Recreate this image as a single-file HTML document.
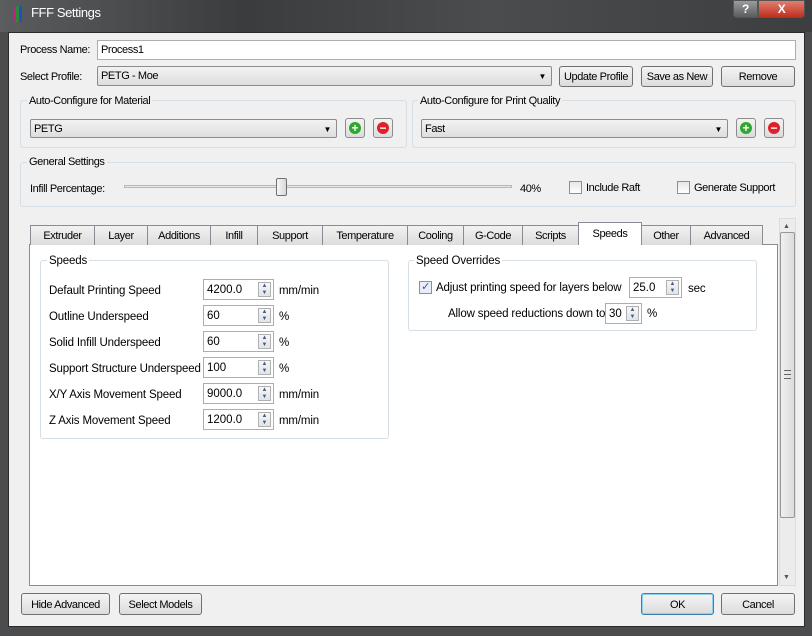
<!DOCTYPE html>
<html><head><meta charset="utf-8"><style>
*{box-sizing:border-box;margin:0;padding:0}
body{width:812px;height:636px;overflow:hidden;background:#4a4c4e;font-family:"Liberation Sans",sans-serif;font-size:11px;letter-spacing:-0.4px;color:#000;position:relative}
.a{position:absolute;white-space:nowrap}
.l{margin-top:1px}
#title{left:0;top:0;width:812px;height:32px;background:linear-gradient(90deg,#5a5c5e,#3a3c3e 30%,#4a4c4e 60%,#3c3e40);}
#body{left:8px;top:32px;width:797px;height:595px;background:#f0f0f0;border:1px solid #2a2a2a}
.in{background:#fff;border:1px solid #abadb3;padding-left:3px;line-height:19px}
.btn{background:linear-gradient(#f4f4f4,#dcdcdc);border:1px solid #707070;border-radius:3px;text-align:center;line-height:20px}
.combo{background:linear-gradient(#f2f2f2,#dedede);border:1px solid #8c8c8c;border-radius:2px;padding-left:3px;line-height:19px}
.combo:after{content:"▼";position:absolute;right:5px;top:0;font-size:8px}
.grp{border:1px solid #d5dfe5;border-radius:3px}
.gt{background:#f0f0f0;padding:0 2px}
.pl,.mn{width:20px;height:20px;border:1px solid #8c8c8c;border-radius:3px;background:linear-gradient(#f4f4f4,#dcdcdc)}
.pl i,.mn i{position:absolute;left:3px;top:3px;width:12px;height:12px;border-radius:50%;color:#fff;font-style:normal;font-weight:bold;font-size:12px;line-height:12px;text-align:center;letter-spacing:0}
.pl i{background:#2fa82f}.mn i{background:#e0202a}
.cb{width:13px;height:13px;border:1px solid #8e8f8f;background:linear-gradient(#e6e6e6,#fff)}
.tab{top:225px;height:20px;border:1px solid #898c95;border-bottom:none;background:linear-gradient(#f2f2f2,#dcdcdc);text-align:center;line-height:21px}
.spin{height:21px;border:1px solid #abadb3;background:#fff;padding-left:3px;line-height:20px;font-size:11.5px;letter-spacing:0}
.spin b{position:absolute;right:2px;top:2px;width:13px;height:15px;border:1px solid #b0b0b0;background:linear-gradient(#f6f6f6,#dfe5ea);font-size:6px;color:#4a5a80;line-height:7px;text-align:center;font-weight:normal}
.dv{font-size:11.5px;letter-spacing:-0.15px;margin-top:1px}
</style></head><body>
<div class="a" id="title"></div>
<div class="a" style="left:13px;top:7px;width:3px;height:14px;background:#c0208a"></div>
<div class="a" style="left:16px;top:6px;width:3px;height:16px;background:#2a8a3a"></div>
<div class="a" style="left:19px;top:6px;width:3px;height:16px;background:#2050c0"></div>
<div class="a" style="left:31px;top:5px;color:#fff;font-size:13px">FFF Settings</div>
<div class="a" style="left:733px;top:0;width:25px;height:18px;border:1px solid #555;border-radius:0 0 0 4px;background:linear-gradient(#9a9c9e,#5a5c5e);color:#fff;text-align:center;font-weight:bold;font-size:12px;line-height:16px">?</div>
<div class="a" style="left:758px;top:0;width:47px;height:18px;border:1px solid #555;border-radius:0 0 4px 0;background:linear-gradient(#e08070,#c03020);color:#fff;text-align:center;font-weight:bold;font-size:12px;line-height:16px">X</div>
<div class="a" id="body"></div>

<div class="a l" style="left:20px;top:43px">Process Name:</div>
<div class="a in" style="left:97px;top:40px;width:699px;height:20px">Process1</div>
<div class="a l" style="left:20px;top:70px">Select Profile:</div>
<div class="a combo" style="left:97px;top:66px;width:455px;height:20px">PETG - Moe</div>
<div class="a btn" style="left:559px;top:66px;width:74px;height:21px">Update Profile</div>
<div class="a btn" style="left:641px;top:66px;width:72px;height:21px">Save as New</div>
<div class="a btn" style="left:721px;top:66px;width:74px;height:21px">Remove</div>

<div class="a grp" style="left:20px;top:100px;width:387px;height:48px"></div>
<div class="a gt l" style="left:27px;top:94px">Auto-Configure for Material</div>
<div class="a combo" style="left:30px;top:119px;width:307px;height:19px">PETG</div>
<div class="a pl" style="left:345px;top:118px"><i>+</i></div>
<div class="a mn" style="left:373px;top:118px"><i>−</i></div>
<div class="a grp" style="left:412px;top:100px;width:384px;height:48px"></div>
<div class="a gt l" style="left:418px;top:94px">Auto-Configure for Print Quality</div>
<div class="a combo" style="left:421px;top:119px;width:307px;height:19px">Fast</div>
<div class="a pl" style="left:736px;top:118px"><i>+</i></div>
<div class="a mn" style="left:764px;top:118px"><i>−</i></div>

<div class="a grp" style="left:20px;top:162px;width:776px;height:45px"></div>
<div class="a gt l" style="left:27px;top:155px">General Settings</div>
<div class="a l" style="left:30px;top:182px">Infill Percentage:</div>
<div class="a" style="left:124px;top:185px;width:388px;height:3px;border:1px solid #b8b8b8;background:#e6e6e6"></div>
<div class="a" style="left:276px;top:178px;width:11px;height:18px;border:1px solid #707070;border-radius:2px;background:linear-gradient(90deg,#f6f6f6,#d8d8d8)"></div>
<div class="a l" style="left:520px;top:182px">40%</div>
<div class="a cb" style="left:569px;top:181px"></div>
<div class="a l" style="left:586px;top:181px">Include Raft</div>
<div class="a cb" style="left:677px;top:181px"></div>
<div class="a l" style="left:694px;top:181px">Generate Support</div>

<div class="a" style="left:29px;top:244px;width:749px;height:342px;background:#fff;border:1px solid #898c95"></div>
<div class="a tab" style="left:30px;width:65px">Extruder</div>
<div class="a tab" style="left:94px;width:54px">Layer</div>
<div class="a tab" style="left:147px;width:64px">Additions</div>
<div class="a tab" style="left:210px;width:48px">Infill</div>
<div class="a tab" style="left:257px;width:66px">Support</div>
<div class="a tab" style="left:322px;width:86px">Temperature</div>
<div class="a tab" style="left:407px;width:57px">Cooling</div>
<div class="a tab" style="left:463px;width:60px">G-Code</div>
<div class="a tab" style="left:522px;width:57px">Scripts</div>
<div class="a tab" style="left:578px;top:222px;height:23px;width:64px;background:#fff;line-height:23px;z-index:2">Speeds</div>
<div class="a tab" style="left:641px;width:50px">Other</div>
<div class="a tab" style="left:690px;width:73px">Advanced</div>

<div class="a" style="left:779px;top:218px;width:17px;height:368px;background:#ececec;border:1px solid #ddd"></div>
<div class="a" style="left:783px;top:223px;font-size:7px;color:#555">▲</div>
<div class="a" style="left:783px;top:574px;font-size:7px;color:#555">▼</div>
<div class="a" style="left:780px;top:232px;width:15px;height:286px;border:1px solid #979797;border-radius:2px;background:linear-gradient(90deg,#f0f0f0,#dcdcdc)"></div>
<div class="a" style="left:784px;top:370px;width:7px;height:9px;border-top:1px solid #666;border-bottom:1px solid #666"></div>
<div class="a" style="left:784px;top:374px;width:7px;height:1px;background:#666"></div>

<div class="a grp" style="left:40px;top:260px;width:349px;height:179px"></div>
<div class="a gt dv" style="left:47px;top:254px;background:#fff">Speeds</div>
<div class="a grp" style="left:408px;top:260px;width:349px;height:71px"></div>
<div class="a gt dv" style="left:414px;top:254px;background:#fff">Speed Overrides</div>

<div class="a dv" style="left:49px;top:284px">Default Printing Speed</div>
<div class="a spin" style="left:203px;top:279px;width:71px">4200.0<b>▲<br>▼</b></div>
<div class="a dv" style="left:279px;top:284px">mm/min</div>
<div class="a dv" style="left:49px;top:310px">Outline Underspeed</div>
<div class="a spin" style="left:203px;top:305px;width:71px">60<b>▲<br>▼</b></div>
<div class="a dv" style="left:279px;top:310px">%</div>
<div class="a dv" style="left:49px;top:336px">Solid Infill Underspeed</div>
<div class="a spin" style="left:203px;top:331px;width:71px">60<b>▲<br>▼</b></div>
<div class="a dv" style="left:279px;top:336px">%</div>
<div class="a dv" style="left:49px;top:362px">Support Structure Underspeed</div>
<div class="a spin" style="left:203px;top:357px;width:71px">100<b>▲<br>▼</b></div>
<div class="a dv" style="left:279px;top:362px">%</div>
<div class="a dv" style="left:49px;top:388px">X/Y Axis Movement Speed</div>
<div class="a spin" style="left:203px;top:383px;width:71px">9000.0<b>▲<br>▼</b></div>
<div class="a dv" style="left:279px;top:388px">mm/min</div>
<div class="a dv" style="left:49px;top:414px">Z Axis Movement Speed</div>
<div class="a spin" style="left:203px;top:409px;width:71px">1200.0<b>▲<br>▼</b></div>
<div class="a dv" style="left:279px;top:414px">mm/min</div>

<div class="a cb" style="left:419px;top:281px;background:#e8eef8;color:#3a58a0;font-size:11px;line-height:11px;text-align:center">✓</div>
<div class="a dv" style="left:436px;top:281px">Adjust printing speed for layers below</div>
<div class="a spin" style="left:629px;top:277px;width:53px">25.0<b>▲<br>▼</b></div>
<div class="a dv" style="left:688px;top:282px">sec</div>
<div class="a dv" style="left:448px;top:307px">Allow speed reductions down to</div>
<div class="a spin" style="left:605px;top:303px;width:37px">30<b>▲<br>▼</b></div>
<div class="a dv" style="left:647px;top:307px">%</div>

<div class="a btn" style="left:21px;top:593px;width:89px;height:22px;line-height:22px">Hide Advanced</div>
<div class="a btn" style="left:119px;top:593px;width:83px;height:22px;line-height:22px">Select Models</div>
<div class="a btn" style="left:641px;top:593px;width:73px;height:22px;line-height:22px;border-color:#3c7fb1;box-shadow:inset 0 0 0 1px #8fd0f0">OK</div>
<div class="a btn" style="left:721px;top:593px;width:74px;height:22px;line-height:22px">Cancel</div>
</body></html>
